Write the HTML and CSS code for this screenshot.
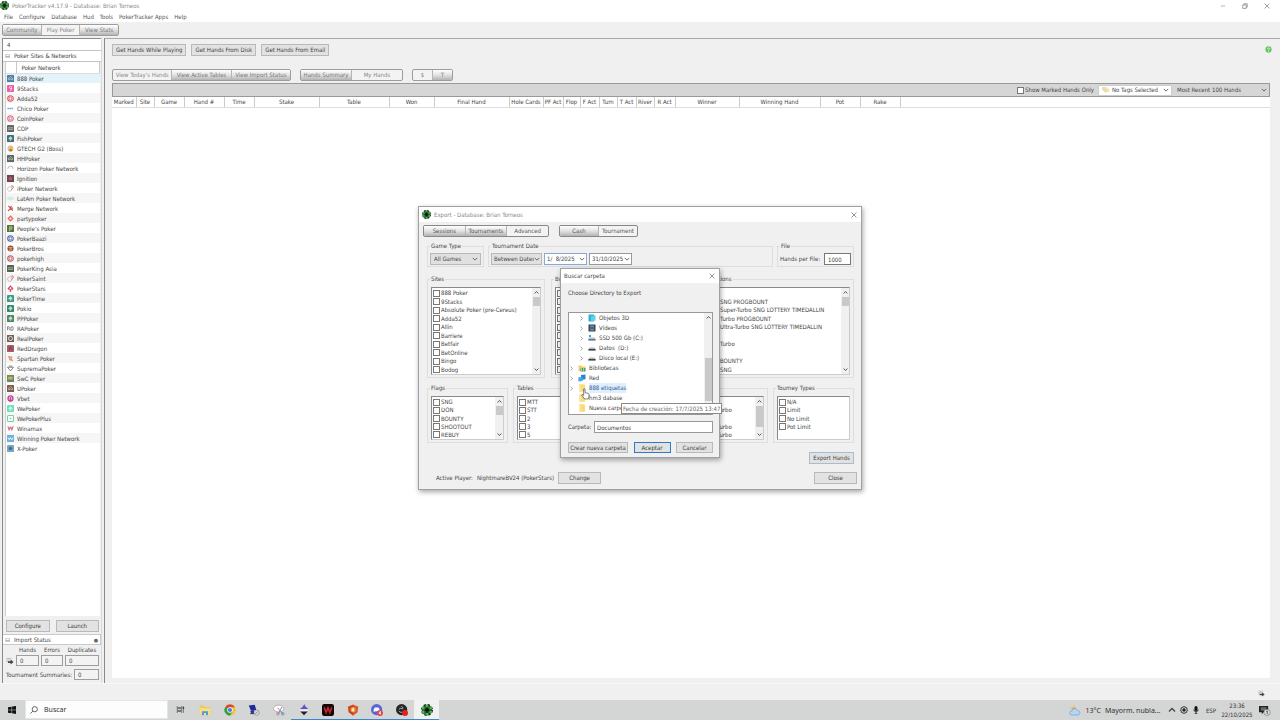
FILE: index.html
```html
<!DOCTYPE html>
<html lang="es">
<head>
<meta charset="utf-8">
<title>PokerTracker v4.17.9 - Database: Brian Torneos</title>
<link rel="stylesheet" href="styles.css">
</head>
<body>
<svg class="defs" aria-hidden="true">
  <symbol id="pt" viewBox="0 0 16 16"><circle cx="8" cy="8" r="7" fill="#2c6a30" stroke="#1c281c" stroke-width="2" stroke-dasharray="3.2 2.3"/><g fill="#4cb552"><circle cx="8" cy="2.4" r="1.8"/><circle cx="8" cy="13.6" r="1.8"/><circle cx="2.8" cy="5.2" r="1.8"/><circle cx="13.2" cy="5.2" r="1.8"/><circle cx="2.8" cy="10.8" r="1.8"/><circle cx="13.2" cy="10.8" r="1.8"/></g><path d="M8 4.2 11.4 8.4Q11 10.4 8.6 9.6L9.4 11.6H6.6L7.4 9.6Q5 10.4 4.6 8.4Z" fill="#0c120c"/></symbol>
  <symbol id="sq" viewBox="0 0 8 8"><rect width="8" height="8" rx=".6" fill="currentColor"/><path d="M1.6 5.8V3.6L4 1.8l2.4 1.8v2.2M3 6V4.4h2V6" fill="none" stroke="#fff" stroke-opacity=".65" stroke-width=".8"/></symbol>
  <symbol id="bar" viewBox="0 0 8 8"><rect width="8" height="8" rx=".6" fill="currentColor"/><path d="M1 3.2h6M1 5h6" stroke="#fff" stroke-opacity=".6" stroke-width=".9"/></symbol>
  <symbol id="leaf" viewBox="0 0 8 8"><rect width="8" height="8" rx="1" fill="currentColor"/><path d="M4 1.2 6.4 4Q6 5.6 4.4 5l.4 1.6H3.2L3.6 5Q2 5.6 1.6 4Z" fill="#e8fff4" fill-opacity=".75"/></symbol>
  <symbol id="nine" viewBox="0 0 8 8"><rect width="8" height="8" rx="1" fill="currentColor"/><path d="M5.2 4H3.8a1.2 1.2 0 1 1 1.4-1.2V5q0 1.400-2 1.400" fill="none" stroke="#fff" stroke-width=".8"/></symbol>
  <symbol id="ring" viewBox="0 0 8 8"><circle cx="4" cy="4" r="3.200" fill="#fff" stroke="currentColor" stroke-width="1.200"/><circle cx="4" cy="4" r="1.600" fill="none" stroke="currentColor"/></symbol>
  <symbol id="disc" viewBox="0 0 8 8"><circle cx="4" cy="4" r="3.6" fill="currentColor"/><path d="M2.6 5.6V3.4a1.4 1.4 0 0 1 2.8 0v2.2" fill="none" stroke="#fff" stroke-opacity=".8"/></symbol>
  <symbol id="dash" viewBox="0 0 8 8"><path d="M.5 4h7" stroke="currentColor" stroke-width="1.8" stroke-dasharray="1.8 .5"/></symbol>
  <symbol id="arc" viewBox="0 0 8 8"><path d="M1 4.4A3 3 0 0 1 7 4.4" fill="none" stroke="currentColor" stroke-width=".8"/></symbol>
  <symbol id="swirl" viewBox="0 0 8 8"><circle cx="3.2" cy="4.6" r="2.6" fill="none" stroke="#b5a3a3" stroke-width=".7"/><path d="M4.6 1.2h2.4v2.2L4.8 5.6" fill="none" stroke="currentColor" stroke-width=".9"/></symbol>
  <symbol id="pill" viewBox="0 0 8 8"><rect y="2" width="8" height="4" rx="2" fill="currentColor"/></symbol>
  <symbol id="cross" viewBox="0 0 8 8"><path d="M1.5 1 6.8 6.4M1 7 4 4l1-3M4 4l3-.6" fill="none" stroke="currentColor" stroke-width="1.3"/></symbol>
  <symbol id="dia" viewBox="0 0 8 8"><path d="M4 .4 7.6 4 4 7.6.4 4Z" fill="currentColor"/><path d="M4 2.6 5.4 4 4 5.4 2.6 4Z" fill="#fff"/></symbol>
  <symbol id="spade" viewBox="0 0 8 8"><path d="M4 .2 7.4 4Q7 6 4.6 5.2L5.2 7.6H2.8L3.4 5.2Q1 6 .6 4Z" fill="currentColor"/><circle cx="4" cy="3.6" r="1" fill="#fff"/></symbol>
  <symbol id="w" viewBox="0 0 8 8"><path d="M1 1.2l1.4 5L4 2l1.6 4.2L7 1.2M1 3.4h6" fill="none" stroke="currentColor" stroke-width=".9"/></symbol>
  <symbol id="x" viewBox="0 0 8 8"><path d="M.7.7l6.6 6.6M7.3.7.7 7.3" fill="none" stroke="currentColor" stroke-width=".9"/></symbol>
  <symbol id="down" viewBox="0 0 8 8"><path d="M1 2.5 4 5.5 7 2.5" fill="none" stroke="currentColor" stroke-width="1.3"/></symbol>
  <symbol id="up" viewBox="0 0 8 8"><path d="M1 5.5 4 2.5 7 5.5" fill="none" stroke="currentColor" stroke-width="1.3"/></symbol>
  <symbol id="right" viewBox="0 0 8 8"><path d="M2.5 1 5.5 4 2.5 7" fill="none" stroke="currentColor" stroke-width="1.3"/></symbol>
  <symbol id="folder" viewBox="0 0 8 8"><path d="M1 .3h5l1 .8v6.6H1Z" fill="#f9dc7a"/><path d="M1 .3h1.6v7.4H1Z" fill="#fbe9a6"/></symbol>
  <symbol id="drive" viewBox="0 0 8 8"><path d="M1.4 3.6h5L7.6 5H.4Z" fill="#b9bdc1"/><path d="M.4 5h7.2v1.6H.4Z" fill="#3d4247"/></symbol>
  <symbol id="import" viewBox="0 0 8 8"><path d="M.4 1.4h5M.4 3h4M.4 4.6h2" stroke="#b5b5b5" stroke-width=".9"/><path d="M2 4.2h2.6V2.6L7.6 5 4.6 7.4V6H2Z" fill="#444"/></symbol>
</svg>

<header class="titlebar">
  <svg class="app-icon"><use href="#pt"/></svg>
  <span class="grow">PokerTracker v4.17.9 - Database: Brian Torneos</span>
  <button class="win" aria-label="Minimize"><svg viewBox="0 0 8 8"><path d="M1 4h6" stroke="#888" stroke-width=".8"/></svg></button>
  <button class="win" aria-label="Restore"><svg viewBox="0 0 8 8"><path d="M1 2.6h4.6v4.6H1ZM2.4 2.4V1H7v4.6H5.8" fill="none" stroke="#777" stroke-width=".9"/></svg></button>
  <button class="win" aria-label="Close"><svg><use href="#x"/></svg></button>
</header>
<nav class="menubar">
  <button>File</button><button>Configure</button><button>Database</button><button>Hud</button><button>Tools</button><button>PokerTracker Apps</button><button>Help</button>
</nav>
<div class="toolbar">
  <div class="seg seg-main"><button class="raised">Community</button><button>Play Poker</button><button class="raised">View Stats</button></div>
</div>

<div class="workspace">
  <aside class="sidebar">
    <div class="side-search">4</div>
    <h2 class="side-head"><i>⊟</i>Poker Sites &amp; Networks</h2>
    <div class="network-box">
      <table class="networks">
        <thead><tr><th></th><th>Poker Network</th></tr></thead>
        <tbody>
        <tr class="selected"><td><svg color="#4d7ea3"><use href="#sq"/></svg></td><td>888 Poker</td></tr>
        <tr><td><svg color="#e85fa8"><use href="#nine"/></svg></td><td>9Stacks</td></tr>
        <tr><td><svg color="#d9545c"><use href="#ring"/></svg></td><td>Adda52</td></tr>
        <tr><td><svg color="#6fa9d6"><use href="#dash"/></svg></td><td>Chico Poker</td></tr>
        <tr><td><svg color="#dc6a84"><use href="#ring"/></svg></td><td>CoinPoker</td></tr>
        <tr><td><svg color="#666"><use href="#bar"/></svg></td><td>COP</td></tr>
        <tr><td><svg color="#3e6f78"><use href="#leaf"/></svg></td><td>FishPoker</td></tr>
        <tr><td><svg viewBox="0 0 8 8"><circle cx="4" cy="4" r="3.3" fill="#edc04d"/><path d="M4 .7A3.3 3.3 0 0 0 2 6.6Z" fill="#c9c4d8"/><path d="M4 4 6.6 6A3.3 3.3 0 0 1 2 6.6Z" fill="#c07a3a"/></svg></td><td>GTECH G2 (Boss)</td></tr>
        <tr><td><svg color="#5b6660"><use href="#sq"/></svg></td><td>HHPoker</td></tr>
        <tr><td><svg color="#999"><use href="#arc"/></svg></td><td>Horizon Poker Network</td></tr>
        <tr><td><svg viewBox="0 0 8 8"><rect width="8" height="8" fill="#5d4b50"/><path d="M2 6V3l2-1.6L6 3v3Z" fill="#c4525a"/></svg></td><td>Ignition</td></tr>
        <tr><td><svg color="#d0585c"><use href="#swirl"/></svg></td><td>iPoker Network</td></tr>
        <tr><td><svg color="#d3ece4"><use href="#pill"/></svg></td><td>LatAm Poker Network</td></tr>
        <tr><td><svg color="#cf4a45"><use href="#cross"/></svg></td><td>Merge Network</td></tr>
        <tr><td><svg color="#ea6a55"><use href="#dia"/></svg></td><td>partypoker</td></tr>
        <tr><td><svg viewBox="0 0 8 8"><rect width="8" height="8" fill="#5a6e4c"/><path d="M3 7V2h2.4v2.4H3" fill="none" stroke="#9ed26a" stroke-width="1.2"/></svg></td><td>People's Poker</td></tr>
        <tr><td><svg color="#5561a8"><use href="#ring"/></svg></td><td>PokerBaazi</td></tr>
        <tr><td><svg viewBox="0 0 8 8"><circle cx="4" cy="4" r="3.5" fill="#8a4a3a"/><path d="M1 3Q4 1 7 3L4 4.6Z" fill="#ee9a4a"/><path d="M2 6l4-.6" stroke="#f3c9a0"/></svg></td><td>PokerBros</td></tr>
        <tr><td><svg color="#bb5a66"><use href="#ring"/></svg></td><td>pokerhigh</td></tr>
        <tr><td><svg color="#55624c"><use href="#bar"/></svg></td><td>PokerKing Asia</td></tr>
        <tr><td><svg color="#cc5c76"><use href="#swirl"/></svg></td><td>PokerSaint</td></tr>
        <tr><td><svg color="#dc4a5c"><use href="#spade"/></svg></td><td>PokerStars</td></tr>
        <tr><td><svg color="#3d9a80"><use href="#leaf"/></svg></td><td>PokerTime</td></tr>
        <tr><td><svg color="#35896c"><use href="#leaf"/></svg></td><td>Pokio</td></tr>
        <tr><td><svg color="#4f8660"><use href="#leaf"/></svg></td><td>PPPoker</td></tr>
        <tr><td><svg viewBox="0 0 8 8"><path d="M.6 6V2h1.6q1 1 0 2L3 6M4.4 6V2.4L6.6 2q1 2 0 4Z" fill="none" stroke="#555" stroke-width=".8"/></svg></td><td>RAPoker</td></tr>
        <tr><td><svg viewBox="0 0 8 8"><rect width="8" height="8" fill="#75605a"/><circle cx="4" cy="4" r="2.3" fill="none" stroke="#eee"/></svg></td><td>RealPoker</td></tr>
        <tr><td><svg viewBox="0 0 8 8"><rect width="8" height="8" rx="1" fill="#a85a64"/><path d="M2 6 4 2l2 4" stroke="#7a3842" fill="none"/></svg></td><td>RedDragon</td></tr>
        <tr><td><svg viewBox="0 0 8 8"><path d="M1 1 6.6 2 5.4 4l1.6 3L3 6Z" fill="#e08a68"/><path d="M3 2.6l2 2" stroke="#fff" stroke-width=".8"/></svg></td><td>Spartan Poker</td></tr>
        <tr><td><svg viewBox="0 0 8 8"><path d="M.6 2.6h6.8L4 6.8ZM2 1.2h4" fill="none" stroke="#666" stroke-width=".9"/></svg></td><td>SupremaPoker</td></tr>
        <tr><td><svg viewBox="0 0 8 8"><rect width="8" height="8" fill="#6f8a62"/><rect x="1.4" y="2" width="5" height="3" fill="#c3b766"/></svg></td><td>SwC Poker</td></tr>
        <tr><td><svg color="#7a5b48"><use href="#sq"/></svg></td><td>UPoker</td></tr>
        <tr><td><svg color="#c23d92"><use href="#disc"/></svg></td><td>Vbet</td></tr>
        <tr><td><svg color="#6ee0bb"><use href="#leaf"/></svg></td><td>WePoker</td></tr>
        <tr><td><svg viewBox="0 0 8 8"><rect x=".6" y=".6" width="6.8" height="6.8" rx="1" fill="#fff" stroke="#6ed6a6" stroke-width="1.2"/><path d="M2.6 4.6 4 2.6l1.4 2Z" fill="#6ed6a6"/></svg></td><td>WePokerPlus</td></tr>
        <tr><td><svg color="#d2536a"><use href="#w"/></svg></td><td>Winamax</td></tr>
        <tr><td><svg viewBox="0 0 8 8"><rect width="8" height="8" fill="#6cb2dd"/><path d="M1 3l1.6 2.4L4 3l1.4 2.4L7 3" fill="none" stroke="#fff"/></svg></td><td>Winning Poker Network</td></tr>
        <tr><td><svg viewBox="0 0 8 8"><rect width="8" height="8" rx="1" fill="#7ba6c0"/><circle cx="4" cy="4" r="2" fill="#3e6e96"/></svg></td><td>X-Poker</td></tr>
        </tbody>
      </table>
    </div>
    <div class="side-buttons"><button class="btn">Configure</button><button class="btn">Launch</button></div>
    <h2 class="side-head status-head"><i>⊟</i>Import Status<b>●</b></h2>
    <div class="status-grid">
      <span></span><label for="hands">Hands</label><label for="errors">Errors</label><label for="dups">Duplicates</label>
      <svg><use href="#import"/></svg><input id="hands" value="0" readonly><input id="errors" value="0" readonly><input id="dups" value="0" readonly>
    </div>
    <div class="summaries"><label for="sum">Tournament Summaries:</label><input id="sum" value="0" readonly></div>
  </aside>
  <div class="splitter"></div>
  <main class="content">
    <div class="get-row">
      <button class="btn">Get Hands While Playing</button><button class="btn">Get Hands From Disk</button><button class="btn">Get Hands From Email</button>
      <svg class="help" viewBox="0 0 8 8" aria-label="Help"><circle cx="4" cy="4" r="3.6" fill="#69c763"/><path d="M2.8 3.2Q3 2 4.2 2.1 5.6 2.4 5 3.6L4.1 4.4V5M4.1 5.7v.8" fill="none" stroke="#fff" stroke-width=".8"/></svg>
    </div>
    <div class="seg-row">
      <div class="seg seg-view"><button>View Today's Hands</button><button class="raised">View Active Tables</button><button class="raised">View Import Status</button></div>
      <div class="seg seg-hands"><button class="raised">Hands Summary</button><button>My Hands</button></div>
      <div class="seg seg-money"><button>$</button><button class="raised">T</button></div>
    </div>
    <div class="filter">
      <label class="check"><input type="checkbox">Show Marked Hands Only</label>
      <div class="pick tags"><svg viewBox="0 0 10 8"><path d="M.6 1h3l3.6 3.4L5 7 .8 3.6Z" fill="#f2dfa6" stroke="#d6bf84" stroke-width=".6"/><path d="M4.6 1h1.4l3 3.2-1.8 2.4" fill="none" stroke="#d6bf84" stroke-width=".8"/></svg><select aria-label="Tags"><option>No Tags Selected</option></select><svg class="chev"><use href="#down"/></svg></div>
      <div class="pick recent"><select aria-label="Range"><option>Most Recent 100 Hands</option></select><svg class="chev"><use href="#down"/></svg></div>
    </div>
    <div class="hands-box">
      <table class="hands">
        <colgroup><col class="c24"><col class="c18"><col class="c30"><col class="c40"><col class="c30"><col class="c65"><col class="c70"><col class="c45"><col class="c75"><col class="c34"><col class="c20"><col class="c17"><col class="c19"><col class="c18"><col class="c19"><col class="c18"><col class="c21"><col class="c64"><col class="c81"><col class="c40"><col class="c40"><col></colgroup>
        <thead><tr><th>Marked</th><th>Site</th><th>Game</th><th>Hand #</th><th>Time</th><th>Stake</th><th>Table</th><th>Won</th><th>Final Hand</th><th>Hole Cards</th><th>PF Act</th><th>Flop</th><th>F Act</th><th>Turn</th><th>T Act</th><th>River</th><th>R Act</th><th>Winner</th><th>Winning Hand</th><th>Pot</th><th>Rake</th><th></th></tr></thead>
      </table>
    </div>
  </main>
</div>
<div class="statusbar"><svg><use href="#import"/></svg></div>

<footer class="taskbar">
  <button class="start" aria-label="Inicio"><svg viewBox="0 0 8 8"><path d="M0 1.2 3.6.7v3H0ZM4.1.6 8 0v3.7H4.1ZM0 4.2h3.6v3L0 6.8ZM4.1 4.2H8V8L4.1 7.3Z" fill="#111"/></svg></button>
  <div class="search"><svg viewBox="0 0 8 8"><circle cx="4.8" cy="3.2" r="2.6" fill="none" stroke="#444" stroke-width=".8"/><path d="M2.9 5.1.5 7.5" stroke="#444" stroke-width=".8"/></svg><input aria-label="Buscar" value="Buscar"></div>
  <div class="apps">
    <button aria-label="Vista de tareas"><svg class="taskview" viewBox="0 0 16 16"><path d="M2 2v2.500h8V2M2 14v-2.500h8V14M2 6.300h8v3.400H2ZM13 2v12" fill="none" stroke="#444" stroke-width="1.200"/><path d="M12 4h2.500v2.500H12Z" fill="#222"/></svg></button>
    <button aria-label="Explorador"><svg viewBox="0 0 16 16"><path d="M1 2h5l1.500 2H15v10H1Z" fill="#edc95a"/><path d="M1 5.500h14V14H1Z" fill="#f8de82"/><path d="M4 15V9.500h8V15h-2.600v-3H6.600v3Z" fill="#4c9fd8"/></svg></button>
    <button aria-label="Chrome"><svg viewBox="0 0 16 16"><circle cx="8" cy="8" r="7.500" fill="#f2c231"/><path d="M8 8 1.500 4.250A7.500 7.500 0 0 1 14.500 4.250H8Z" fill="#dd4437"/><path d="M8 8 1.500 4.250A7.500 7.500 0 0 0 8 15.500L11.300 9.800Z" fill="#2f9e53"/><circle cx="8" cy="8" r="3.700" fill="#fff"/><circle cx="8" cy="8" r="2.800" fill="#4380df"/></svg></button>
    <button aria-label="Escritorio remoto"><svg viewBox="0 0 16 16"><path d="M1 2 9 1 11 8 4 9Z" fill="#1d2a9c"/><path d="M3 9l5-1v4H4Z" fill="#26358f"/><path d="M3 12h6v1.500H3Z" fill="#345"/><circle cx="11.500" cy="11.500" r="3.500" fill="#d9dde3" stroke="#8d949c"/><path d="M10 13l3-3" stroke="#667"/></svg></button>
    <button aria-label="Recortes"><svg viewBox="0 0 16 16"><ellipse cx="7.500" cy="6" rx="7" ry="4.500" fill="#fff" stroke="#c88f93"/><path d="M6 5l7 8M12 4 7 13" stroke="#6c94b4" stroke-width="1.300"/><circle cx="6.500" cy="13" r="1.700" fill="none" stroke="#c26a70"/><circle cx="13" cy="13" r="1.700" fill="none" stroke="#4f88b4"/></svg></button>
    <button class="open" aria-label="Spade app"><svg viewBox="0 0 16 16"><path d="M8.500 0Q9 3 14 7H2Q7 4 8.500 0" fill="#6450c8"/><path d="M2 7h12Q14 10 11 10H5Q2 10 2 7" fill="#eee"/><path d="M3 10h10L8 15Z" fill="#22232e"/></svg></button>
    <button class="open" aria-label="W app"><svg viewBox="0 0 16 16"><rect width="16" height="16" rx="3" fill="#120a0b"/><path d="M3 4.500 5.500 11.500 8 5l2.500 6.500L13 4.500" fill="none" stroke="#d3252d" stroke-width="2"/></svg></button>
    <button class="open" aria-label="Shield app"><svg viewBox="0 0 16 16"><path d="M8 .5 15 3.500 14 11 8 15.500 2 11 1 3.500Z" fill="#d9562b"/><path d="M8 2v12L3 10.500V4Z" fill="#b73a22"/><circle cx="8" cy="7.500" r="3.600" fill="#e7a33c"/><path d="M8 5.500v4" stroke="#fff" stroke-width="1.800"/></svg></button>
    <button class="open" aria-label="Discord"><svg viewBox="0 0 16 16"><circle cx="7.500" cy="7.500" r="7.500" fill="#5865d8"/><path d="M3.500 10.500Q3 6.500 5 4.500h5Q12 6.500 11.500 10.500L9.500 9.500h-4Z" fill="#fff"/><circle cx="12" cy="12" r="4" fill="#e2464d"/><path d="M12.500 14V9.700L10.500 12.500h3" fill="none" stroke="#fff" stroke-width=".9"/></svg></button>
    <button class="open" aria-label="OBS"><svg viewBox="0 0 16 16"><circle cx="7.500" cy="7.500" r="7.500" fill="#252525"/><path d="M7 3q3 1 2 4M4 9q1 3 4 2M4 7q1-2 4-1" stroke="#aaa" fill="none" stroke-width="1.300"/><circle cx="12" cy="12" r="4" fill="#e22222"/></svg></button>
    <button class="open active" aria-label="PokerTracker"><svg><use href="#pt"/></svg></button>
  </div>
  <div class="tray">
    <svg class="weather" viewBox="0 0 12 10"><circle cx="5" cy="4" r="2.500" fill="#f0ad43"/><path d="M5 0v1M1 2l1 .8" stroke="#f0ad43"/><path d="M2.500 9.500a2 2 0 0 1 .3-4A3 3 0 0 1 8.500 5a2.300 2.300 0 0 1 .8 4.500Z" fill="#b3d5f7" stroke="#6fa5dd" stroke-width=".7"/></svg>
    <span class="temp">13°C</span><span class="sky">Mayorm. nubla...</span>
    <svg class="t8"><use href="#up"/></svg>
    <svg class="t8" viewBox="0 0 8 8"><circle cx="4" cy="4" r="3.300" fill="none" stroke="#222" stroke-width=".9"/><circle cx="4" cy="4" r="1.700" fill="#222"/></svg>
    <svg class="t8" viewBox="0 0 8 8"><rect x="2.500" y="0" width="3" height="5" rx="1.500" fill="#111"/><path d="M1.700 3.500Q2 5.800 4 5.800T6.300 3.500M4 5.800V8M2.600 7.700h2.800" fill="none" stroke="#222" stroke-width=".8"/></svg>
    <span class="lang">ESP</span>
    <span class="clock">23:36<br>22/10/2025</span>
    <svg class="note" viewBox="0 0 14 12"><path d="M1 1h10v7H6L4 10V8H1Z" fill="#222"/><path d="M3 3.300h6M3 5.300h6" stroke="#ccc" stroke-width=".8"/><circle cx="9.800" cy="8" r="3.500" fill="#dadada" stroke="#666" stroke-width=".6"/><path d="M9 7.200l1-.9V10" fill="none" stroke="#333" stroke-width=".8"/></svg>
  </div>
</footer>

<section class="window export" aria-label="Export">
  <header class="wtitle"><svg class="app-icon"><use href="#pt"/></svg><span class="grow">Export - Database: Brian Torneos</span><button class="wx" aria-label="Close"><svg><use href="#x"/></svg></button></header>
  <div class="wbody">
    <div class="xtabs">
      <div class="seg seg-x1"><button class="raised">Sessions</button><button class="raised">Tournaments</button><button>Advanced</button></div>
      <div class="seg seg-x2"><button class="raised">Cash</button><button>Tournament</button></div>
    </div>
    <div class="groups row-a">
      <fieldset class="g57"><legend>Game Type</legend><div class="pick grey"><select aria-label="Game Type"><option>All Games</option></select><svg class="chev"><use href="#down"/></svg></div></fieldset>
      <fieldset class="grow dates"><legend>Tournament Date</legend>
        <div class="pick grey"><select aria-label="Date mode"><option>Between Dates</option></select><svg class="chev"><use href="#down"/></svg></div>
        <div class="pick date focus"><input aria-label="From" value="1/  8/2025"><svg class="chev"><use href="#down"/></svg></div>
        <div class="pick date"><input aria-label="To" value="31/10/2025"><svg class="chev"><use href="#down"/></svg></div>
      </fieldset>
      <fieldset class="g77"><legend>File</legend><label for="hpf">Hands per File:</label><input id="hpf" value="1000"></fieldset>
    </div>
    <div class="groups row-b">
      <fieldset class="g118"><legend>Sites</legend><div class="list"><div class="items">
        <label><input type="checkbox">888 Poker</label><label><input type="checkbox">9Stacks</label><label><input type="checkbox">Absolute Poker (pre-Cereus)</label><label><input type="checkbox">Adda52</label><label><input type="checkbox">Allin</label><label><input type="checkbox">Barriere</label><label><input type="checkbox">Betfair</label><label><input type="checkbox">BetOnline</label><label><input type="checkbox">Bingo</label><label><input type="checkbox">Bodog</label></div>
        <div class="scroll"><svg><use href="#up"/></svg><i></i><svg><use href="#down"/></svg></div></div></fieldset>
      <fieldset class="g118"><legend>Buy-ins</legend><div class="list"><div class="items">
        <label><input type="checkbox"></label><label><input type="checkbox"></label><label><input type="checkbox"></label><label><input type="checkbox"></label><label><input type="checkbox"></label><label><input type="checkbox"></label><label><input type="checkbox"></label><label><input type="checkbox"></label><label><input type="checkbox"></label><label><input type="checkbox"></label></div></div></fieldset>
      <fieldset class="grow desc"><legend>Descriptions</legend><div class="list"><div class="items">
        <span></span><span>SNG PROGBOUNT</span><span>Super-Turbo SNG LOTTERY TIMEDALLIN</span><span>Turbo PROGBOUNT</span><span>Ultra-Turbo SNG LOTTERY TIMEDALLIN</span><span></span><span>Turbo</span><span></span><span>BOUNTY</span><span>SNG</span></div>
        <div class="scroll"><svg><use href="#up"/></svg><i></i><svg><use href="#down"/></svg></div></div></fieldset>
    </div>
    <div class="groups row-c">
      <fieldset class="g81"><legend>Flags</legend><div class="list"><div class="items">
        <label><input type="checkbox">SNG</label><label><input type="checkbox">DON</label><label><input type="checkbox">BOUNTY</label><label><input type="checkbox">SHOOTOUT</label><label><input type="checkbox">REBUY</label></div>
        <div class="scroll"><svg><use href="#up"/></svg><i></i><svg><use href="#down"/></svg></div></div></fieldset>
      <fieldset class="g81"><legend>Tables</legend><div class="list"><div class="items">
        <label><input type="checkbox">MTT</label><label><input type="checkbox">STT</label><label><input type="checkbox">2</label><label><input type="checkbox">3</label><label><input type="checkbox">5</label></div></div></fieldset>
      <fieldset class="grow speed"><legend>Speed</legend><div class="list"><div class="items">
        <span></span><span>Turbo</span><span></span><span>Turbo</span><span>Turbo</span></div>
        <div class="scroll tall"><svg><use href="#up"/></svg><i></i><svg><use href="#down"/></svg></div></div></fieldset>
      <fieldset class="g81"><legend>Tourney Types</legend><div class="list"><div class="items">
        <label><input type="checkbox">N/A</label><label><input type="checkbox">Limit</label><label><input type="checkbox">No Limit</label><label><input type="checkbox">Pot Limit</label><span></span></div></div></fieldset>
    </div>
    <div class="xaction"><button class="btn">Export Hands</button></div>
    <div class="xfoot"><span>Active Player:</span><span>NightmareBV24 (PokerStars)</span><button class="btn">Change</button><button class="btn close">Close</button></div>
  </div>
</section>

<section class="window browse" aria-label="Buscar carpeta">
  <header class="wtitle"><span class="grow">Buscar carpeta</span><button class="wx" aria-label="Cerrar"><svg><use href="#x"/></svg></button></header>
  <div class="bbody">
    <p>Choose Directory to Export</p>
    <div class="tree">
      <ul>
        <li class="sub"><svg class="exp"><use href="#right"/></svg><svg viewBox="0 0 8 8"><path d="M.5.500h5.500v7H.5Z" fill="#2fb1d8"/><path d="M3 2.500 7.500 1v5.500L3 7.500Z" fill="#5fd0ec"/></svg>Objetos 3D</li>
        <li class="sub"><svg class="exp"><use href="#right"/></svg><svg viewBox="0 0 8 8"><path d="M.5.500h7v7h-7Z" fill="#3b4450"/><path d="M2 1.500h4v2H2ZM2 4.500h4v2H2Z" fill="#6d86a8"/></svg>Vídeos</li>
        <li class="sub"><svg class="exp"><use href="#right"/></svg><svg viewBox="0 0 8 8"><path d="M1 1h2v2H1Z" fill="#35a6dc"/><path d="M.8 3.600h5.600L7.600 5H.4Z" fill="#b9bdc1"/><path d="M.4 5h7.200v1.600H.4Z" fill="#5a7f88"/></svg>SSD 500 Gb (C:)</li>
        <li class="sub"><svg class="exp"><use href="#right"/></svg><svg><use href="#drive"/></svg>Datos&nbsp; (D:)</li>
        <li class="sub"><svg class="exp"><use href="#right"/></svg><svg><use href="#drive"/></svg>Disco local (E:)</li>
        <li><svg class="exp"><use href="#right"/></svg><svg viewBox="0 0 8 8"><path d="M.5 1.500h3l.8 1h3.200v4.500h-7Z" fill="#f2d062"/><path d="M2.500 4h5v3.600h-5Z" fill="#5d9b77"/><path d="M3.500 4v3.600M5.500 4v3.600" stroke="#dceecb" stroke-width=".6"/></svg>Bibliotecas</li>
        <li><svg class="exp"><use href="#right"/></svg><svg viewBox="0 0 8 8"><path d="M3 1l4.500-.6v4.800L3 6Z" fill="#2b83cf"/><path d="M.4 3.300 4.600 3v4L.4 7.500Z" fill="#4aa5e6"/></svg>Red</li>
        <li class="hot"><svg class="exp"><use href="#right"/></svg><svg><use href="#folder"/></svg><span>888 etiquetas</span></li>
        <li><svg class="exp"></svg><svg><use href="#folder"/></svg>hm3 dabase</li>
        <li><svg class="exp"></svg><svg><use href="#folder"/></svg>Nueva carpeta</li>
      </ul>
      <div class="scroll"><svg><use href="#up"/></svg><i></i></div>
    </div>
    <div class="folder-row"><label for="carp">Carpeta:</label><input id="carp" value="Documentos"></div>
    <div class="bbuttons"><button class="btn">Crear nueva carpeta</button><button class="btn primary">Aceptar</button><button class="btn">Cancelar</button></div>
  </div>
  <svg class="cursor" viewBox="0 0 10 13"><path d="M3 1q1-.8 1.500 0V5l3.500.8q1.300.4 1 2L8.300 12H4L1 8q-.2-1.200 1-.8L3 8Z" fill="#fff" stroke="#333" stroke-width=".7"/></svg>
  <div class="tip" role="tooltip">Fecha de creación: 17/7/2025 13:47</div>
</section>
</body>
</html>
```

FILE: styles.css
```css
* { box-sizing: border-box; }
html, body { height: 100%; }
body {
  margin: 0;
  display: flex;
  flex-direction: column;
  background: #f0f0f0;
  color: #444;
  font: 6px/10px "DejaVu Sans Condensed", "DejaVu Sans", sans-serif;
  overflow: hidden;
  position: relative;
}
button, input, select { font: inherit; color: inherit; margin: 0; padding: 0; border: 0; background: none; }
button { white-space: nowrap; text-align: center; }
input, select { min-width: 0; }
select { appearance: none; }
svg { display: block; flex: none; width: 8px; height: 8px; }
.defs { position: absolute; width: 0; height: 0; }
.grow { flex: 1; }
.app-icon { width: 9px; height: 9px; }

.titlebar { display: flex; align-items: center; height: 11px; padding: 0 2px 0 0; background: #fff; color: #8a8a8a; }
.titlebar .app-icon { margin: 0 3px 0 0; }
.win { width: 22px; height: 11px; display: flex; align-items: center; justify-content: center; color: #777; }
.win svg { width: 6px; height: 6px; }
.menubar { display: flex; align-items: center; gap: 6px; height: 11px; padding: 0 4px; background: #fff; color: #555; }
.toolbar { height: 16px; padding: 2px; }

.seg { display: flex; height: 12px; border: 1px solid #9c9c9c; border-radius: 2px; overflow: hidden; color: #888; background: #f3f3f3; }
.seg button { flex: 1; line-height: 10px; }
.seg button + button { border-left: 1px solid #b5b5b5; }
.seg .raised { background: linear-gradient(#fff, #e2e2e2 50%, #b4b4b4); color: #777; }
.seg-main { width: 117px; }

.btn { height: 12px; border: 1px solid #b9b9b9; background: #e2e2e2; color: #3c3c3c; line-height: 10px; }

.workspace { flex: 1; display: flex; min-height: 0; }
.sidebar { width: 99px; margin-left: 2px; border-left: 1px solid #8a8a8a; border-top: 1px solid #8a8a8a; display: flex; flex-direction: column; }
.side-search { height: 12px; padding-left: 4px; background: #fff; border-bottom: 1px solid #c4c4c4; line-height: 12px; }
.side-head { display: flex; align-items: center; height: 11px; margin: 0; padding: 0 2px; background: #fff; border-bottom: 1px solid #c4c4c4; font-size: 6px; font-weight: 400; }
.side-head i { width: 9px; font: 6px/8px "DejaVu Sans", sans-serif; color: #777; }
.side-head b { margin-left: auto; font: 5px/8px "DejaVu Sans", sans-serif; color: #666; }
.network-box { flex: 1; margin: 0 1px 0 2px; background: #fff; border-left: 1px solid #d0d0d0; }
.networks { width: 100%; border-collapse: collapse; table-layout: fixed; }
.networks th { height: 11px; padding: 0; font-weight: 400; text-align: left; border-bottom: 1px solid #ddd; border-right: 1px solid #c8c8c8; line-height: 9px; }
.networks th:first-child { width: 10px; }
.networks th + th { padding-left: 5px; }
.networks td { height: 10px; padding: 0 0 0 1px; line-height: 9px; white-space: nowrap; }
.networks td svg { width: 7px; height: 7px; }
.networks tr:nth-child(odd) td { background: #f6f6f6; }
.networks tr.selected td { background: #e3f3fa; }
.side-buttons { display: grid; grid-template-columns: 1fr 1fr; gap: 6px; padding: 4px 2px 2px 3px; }
.status-head { border: 1px solid #c9c9c9; border-left: 0; }
.status-grid { display: grid; grid-template-columns: 8px 23px 22px 34px; gap: 0 2px; padding: 0 2px 2px 3px; align-items: center; }
.status-grid label { text-align: center; }
.sidebar input { height: 11px; padding-left: 3px; border: 1px solid #9e9e9e; background: #f3f3f3; }
.summaries { display: flex; align-items: center; justify-content: space-between; padding: 1px 2px 3px 3px; white-space: nowrap; }
.summaries input { width: 25px; }
.splitter { width: 3px; border-left: 1px solid #d9d9d9; }

.content { flex: 1; min-width: 0; border-left: 1px solid #8a8a8a; border-top: 1px solid #a8a8a8; padding: 5px 10px 5px 7px; display: flex; flex-direction: column; }
.get-row { display: flex; gap: 5px; height: 25px; margin-right: -2px; }
.get-row .btn { padding: 0 3px; }
.help { margin: 2px 0 0 auto; width: 7px; height: 7px; }
.seg-row { display: flex; gap: 9px; height: 14px; }
.seg-view { width: 179px; }
.seg-hands { width: 103px; }
.seg-money { width: 41px; }
.filter { display: flex; align-items: center; justify-content: flex-end; gap: 2px; height: 14px; border: 1px solid #999; background: #d6d6d6; }
.check { display: flex; align-items: center; margin-right: 2px; white-space: nowrap; }
input[type=checkbox] { appearance: none; flex: none; width: 7px; height: 7px; margin-right: 1px; border: 1px solid #777; background: #fff; }
.pick { display: flex; align-items: center; height: 12px; padding: 0 2px 0 3px; }
.pick select, .pick input { flex: 1; width: 0; height: 10px; line-height: 10px; }
.chev { width: 6px; height: 6px; color: #666; }
.tags { width: 74px; height: 11px; background: #fff; border: 1px solid #ccc; }
.tags select { margin-left: 2px; }
.recent { width: 95px; }
.hands-box { flex: 1; background: #fff; }
.hands { width: 100%; border-collapse: collapse; table-layout: fixed; }
.hands th { height: 10px; padding: 0; font-weight: 400; line-height: 9px; white-space: nowrap; border-right: 1px solid #ccc; border-bottom: 1px solid #ddd; }
.hands th:last-child { border-right: 0; }
.c17 { width: 17px; } .c18 { width: 18px; } .c19 { width: 19px; } .c20 { width: 20px; } .c21 { width: 21px; } .c24 { width: 24px; }
.c30 { width: 30px; } .c34 { width: 34px; } .c40 { width: 40px; } .c45 { width: 45px; } .c64 { width: 64px; } .c65 { width: 65px; }
.c70 { width: 70px; } .c75 { width: 75px; } .c81 { width: 81px; }

.statusbar { height: 17px; padding: 6px 15px 0 0; display: flex; justify-content: flex-end; border-top: 1px solid #f7f7f7; }
.statusbar svg { width: 7px; height: 7px; }

.taskbar { display: flex; height: 20px; background: #d4d5d5; color: #333; font: 7px/9px "Noto Sans", sans-serif; }
.start { width: 24px; display: flex; align-items: center; justify-content: center; }
.search { display: flex; align-items: center; gap: 6px; width: 143px; margin: 0 0 1px 1px; padding-left: 4px; background: #fdfdfd; border: 1px solid #e5e5e5; }
.search input { flex: 1; }
.apps { display: flex; width: 271px; }
.apps button { flex: 1; display: flex; align-items: center; justify-content: center; border-bottom: 1px solid transparent; }
.apps svg { width: 12px; height: 12px; }
.apps .taskview { width: 9px; height: 9px; }
.apps .open { border-bottom-color: #3c86cc; }
.apps .active { background: #f0f2f2; }
.tray { display: flex; align-items: center; gap: 4px; margin-left: auto; padding-right: 9px; white-space: nowrap; }
.weather { width: 12px; height: 11px; }
.sky { width: 59px; }
.t8 { color: #444; }
.lang, .clock { font: 6px/9px "DejaVu Sans Condensed", "DejaVu Sans", sans-serif; }
.lang { margin-left: 2px; }
.clock { width: 34px; text-align: center; }
.note { width: 13px; height: 11px; }

.window { position: absolute; display: flex; flex-direction: column; background: #f0f0f0; border: 1px solid #a0a0a0; box-shadow: 1px 2px 5px rgba(0,0,0,.35); }
.wtitle { display: flex; align-items: center; gap: 3px; height: 15px; padding: 0 1px 0 3px; background: #fff; color: #888; }
.wx { color: #666; padding: 3px; }
.wx svg { width: 6px; height: 6px; }

.export { left: 418px; top: 206px; width: 444px; height: 284px; }
.wbody { padding: 3px 7px 0 8px; display: flex; flex-direction: column; flex: 1; }
.xtabs { display: flex; gap: 10px; margin-left: -4px; }
.export .seg { color: #555; border-color: #888; }
.export .seg .raised { color: #555; }
.seg-x1 { width: 126px; }
.seg-x2 { width: 79px; }
.groups { display: flex; }
fieldset { position: relative; margin: 0; padding: 7px 3px 3px; border: 1px solid #dedede; min-width: 0; display: flex; align-items: center; gap: 2px; }
legend { position: absolute; top: -6px; left: 2px; padding: 0 1px; background: #f0f0f0; line-height: 10px; white-space: nowrap; }
.row-a { margin-top: 9px; height: 21px; gap: 4px; }
.row-a fieldset { padding: 5px 2px 0; }
.g57 { width: 57px; } .g77 { width: 77px; } .g81 { width: 81px; } .g118 { width: 118px; }
.row-a label { white-space: nowrap; margin-right: auto; }
.row-a .g77 input { width: 27px; height: 12px; padding-left: 3px; border: 1px solid #777; background: #fff; }
.pick.grey { width: 51px; border: 1px solid #b8b8b8; background: #e0e0e0; }
.dates .pick { padding: 0 1px 0 2px; }
.pick.date { width: 43px; border: 1px solid #999; background: #fff; }
.pick.date input { white-space: pre; }
.pick.focus { border-color: #86a8dc; }
.row-b { margin-top: 12px; height: 99px; gap: 6px; }
.row-c { margin-top: 10px; height: 55px; gap: 5px; }
.row-b fieldset, .row-c fieldset { align-items: stretch; padding: 7px 3px 2px; }
.list { flex: 1; display: flex; min-width: 0; border: 1px solid #999; border-color: #888 #ccc #ccc #888; background: #fff; }
.items { flex: 1; min-width: 0; display: flex; flex-direction: column; padding: 1px 1px 0; white-space: nowrap; }
.items > * { flex: 1; min-height: 0; display: flex; align-items: center; line-height: 8px; }
.items input[type=checkbox] { margin-right: 1px; }
.desc .items { padding-left: 40px; }
.desc legend { left: 21px; }
.speed .items { padding-left: 113px; }
.scroll { width: 8px; display: flex; flex-direction: column; align-items: center; background: #f0f0f0; padding: 2px 0; color: #333; }
.scroll svg { width: 5px; height: 5px; }
.scroll i { width: 7px; height: 9px; margin: 2px 0 auto; background: #c9c9c9; }
.scroll.tall i { height: 21px; }
.xaction { display: flex; justify-content: flex-end; margin-top: 9px; }
.xaction .btn { width: 45px; border-color: #a9bccf; }
.xfoot { display: flex; align-items: center; gap: 4px; margin: 8px -3px 0 9px; }
.xfoot .btn { width: 43px; }
.xfoot .close { margin-left: auto; }

.browse { left: 560px; top: 268px; width: 160px; height: 190px; }
.browse .wtitle { height: 14px; color: #444; }
.bbody { flex: 1; padding: 4px 6px 0 7px; display: flex; flex-direction: column; }
.bbody p { margin: 0 0 13px; line-height: 12px; }
.tree { display: flex; height: 103px; overflow: hidden; border: 1px solid #999; background: #fff; }
.tree ul { flex: 1; margin: 0; padding: 0; list-style: none; white-space: nowrap; }
.tree li { display: flex; align-items: center; gap: 3px; height: 10px; }
.tree li.sub { padding-left: 10px; }
.tree .exp { width: 5px; height: 5px; margin-right: 1px; color: #888; }
.hot span { background: #e2effb; color: #2a5ca0; }
.tree .scroll i { height: 43px; margin-top: 38px; }
.folder-row { display: flex; align-items: center; justify-content: space-between; margin-top: 6px; }
.folder-row input { width: 119px; height: 12px; padding-left: 2px; border: 1px solid #999; background: #fff; }
.bbuttons { display: grid; grid-template-columns: 60px 37px 37px; margin-top: 9px; justify-content: space-between; }
.bbuttons .btn { height: 11px; line-height: 9px; }
.bbuttons .primary { border-color: #2b79c8; }
.cursor { position: absolute; left: 20px; top: 119px; width: 9px; height: 12px; }
.tip { position: absolute; left: 60px; top: 134px; height: 11px; padding: 0 1px; border: 1px solid #8a8a8a; background: #fff; color: #666; line-height: 9px; white-space: nowrap; }
```
